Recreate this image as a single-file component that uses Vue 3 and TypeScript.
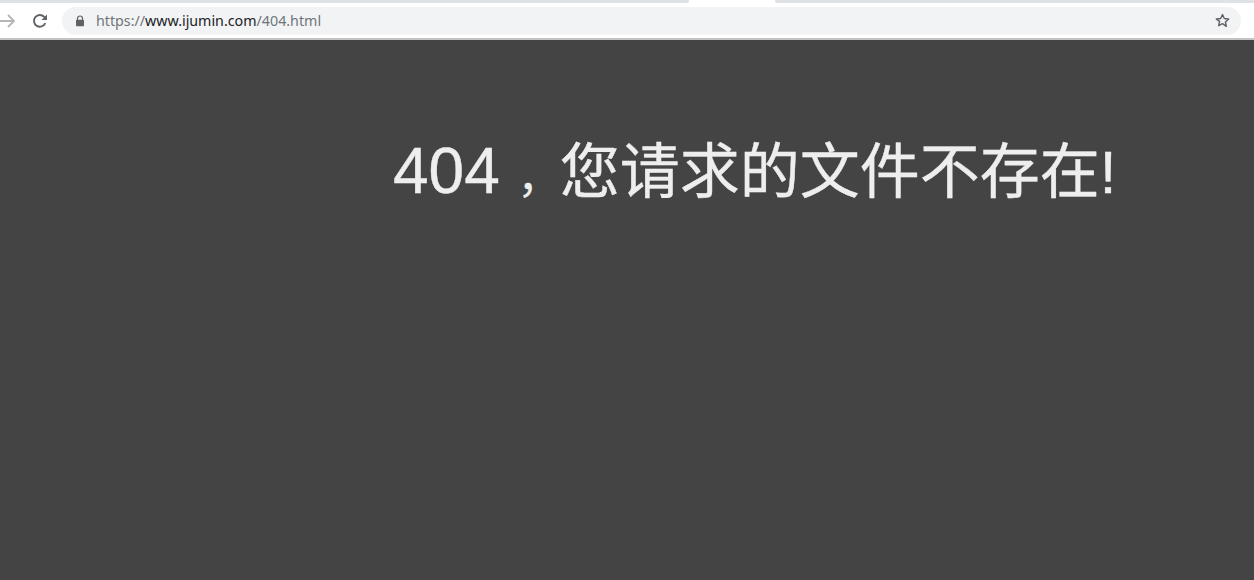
<script setup lang="ts">
const title = '您请求的文件不存在!'
</script>

<template>
  <div class="page">
    <header class="chrome">
      <div class="tabstrip">
        <div class="strip left"></div>
        <div class="active"></div>
        <div class="strip right"></div>
      </div>
      <div class="toolbar">
        <svg class="nav forward" width="16" height="16" viewBox="0 0 16 16" fill="none" stroke="#b4b6b8" stroke-width="1.8">
          <path d="M0 8H14M8 2L14 8L8 14" />
        </svg>
        <svg class="nav reload" width="16" height="16" viewBox="0 0 16 16" fill="none">
          <path d="M13.3 10.2A5.9 5.9 0 1 1 12.2 3.8L14.2 5.8" stroke="#5f6368" stroke-width="1.9" />
          <path d="M15 1.5V7H9.5Z" fill="#5f6368" />
        </svg>
        <div class="omnibox">
          <svg class="lock" width="10" height="12" viewBox="0 0 10 12">
            <path d="M2.5 5V3.5a2.5 2.5 0 0 1 5 0V5" fill="none" stroke="#5f6368" stroke-width="1.2" />
            <rect x="1" y="4.8" width="8" height="6.4" rx="0.8" fill="#5f6368" />
          </svg>
          <span class="url"><span class="dim">https://</span>www.ijumin.com<span class="dim">/404.html</span></span>
          <svg class="star" width="15" height="15" viewBox="0 0 24 24" fill="none" stroke="#5f6368" stroke-width="2.3" stroke-linejoin="round">
            <path d="M12 2.5l2.900 6.400 7 .8-5.200 4.700 1.400 6.900L12 17l-6.100 3.300 1.400-6.900L2.100 9.700l7-.8z" />
          </svg>
        </div>
      </div>
    </header>
    <main class="content">
      <h1 class="heading"><span class="num">404</span><span class="comma">，</span>{{ title }}</h1>
    </main>
  </div>
</template>

<style>
html, body { margin: 0; padding: 0; background: #444; overflow: hidden; }
</style>

<style scoped>
.page {
  width: 1254px;
  height: 580px;
  display: flex;
  flex-direction: column;
  background: #444;
}
.chrome {
  height: 40px;
  flex: none;
  background: #fff;
  box-sizing: border-box;
  border-bottom: 2px solid #c4c4c4;
  display: flex;
  flex-direction: column;
}
.tabstrip {
  height: 3px;
  flex: none;
  display: flex;
}
.strip { background: #dee1e6; }
.strip.left { width: 689px; flex: none; border-bottom-right-radius: 6px; }
.active { width: 86px; flex: none; background: #fff; }
.strip.right { flex: 1; border-bottom-left-radius: 6px; }
.toolbar {
  flex: 1;
  display: flex;
  align-items: center;
  padding: 4px 13px 3px 0;
}
.nav { flex: none; }
.reload { margin-left: 16px; }
.omnibox {
  flex: 1;
  height: 28px;
  margin-left: 14px;
  padding: 0 11px 1px 13px;
  box-sizing: border-box;
  border-radius: 14px;
  background: #f1f3f4;
  display: flex;
  align-items: center;
}
.lock { flex: none; }
.url {
  margin-left: 11px;
  font: 14.25px "Noto Sans", "Open Sans", sans-serif;
  color: #202124;
  flex: 1;
}
.dim { color: #70757a; }
.star { flex: none; }
.content {
  flex: 1;
  padding-top: 91px;
  padding-left: 393px;
}
.heading {
  margin: 0;
  font-family: "Liberation Sans", "Noto Sans CJK SC", sans-serif;
  font-size: 60px;
  font-weight: 400;
  line-height: 80px;
  color: #eee;
  white-space: nowrap;
  -webkit-text-stroke: 0.4px #eee;
}
.num { font-size: 64px; }
.comma { font-size: 42px; padding-left: 18px; }
</style>
